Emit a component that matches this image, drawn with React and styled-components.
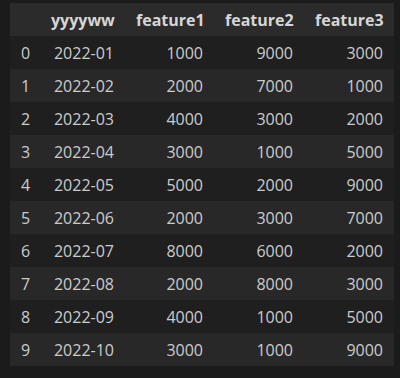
import React from "react";
import styled, { createGlobalStyle } from "styled-components";

const GlobalStyle = createGlobalStyle`
  html, body {
    margin: 0;
    background: #1b1b1b;
  }
`;

const Output = styled.div`
  padding: 3px 6px 12px 10px;
  font-family: "Open Sans", "Noto Sans", sans-serif;
  font-size: 16px;
  color: #cccccc;
`;

const Grid = styled.div`
  display: grid;
  grid-template-columns: 30px 85px 89px 90px 90px;
  width: 384px;
`;

const Row = styled.div`
  display: contents;
  & > div {
    background: ${(props) =>
      props.$header ? "#2b2b2b" : props.$odd ? "#282828" : "#1f1f1f"};
  }
`;

const Cell = styled.div`
  height: 33px;
  line-height: 34px;
  padding: 0 11px;
  text-align: ${(props) => (props.$left ? "left" : "right")};
  font-weight: ${(props) => (props.$bold ? 700 : 400)};
  color: ${(props) => (props.$bold ? "#d6d6d6" : "#cccccc")};
  white-space: nowrap;
`;

const columns = ["yyyyww", "feature1", "feature2", "feature3"];

const data = [
  ["2022-01", 1000, 9000, 3000],
  ["2022-02", 2000, 7000, 1000],
  ["2022-03", 4000, 3000, 2000],
  ["2022-04", 3000, 1000, 5000],
  ["2022-05", 5000, 2000, 9000],
  ["2022-06", 2000, 3000, 7000],
  ["2022-07", 8000, 6000, 2000],
  ["2022-08", 2000, 8000, 3000],
  ["2022-09", 4000, 1000, 5000],
  ["2022-10", 3000, 1000, 9000],
];

export default function App() {
  return (
    <>
      <GlobalStyle />
      <Output>
        <Grid>
          <Row $header>
            <Cell $left />
            {columns.map((c) => (
              <Cell key={c} $bold>
                {c}
              </Cell>
            ))}
          </Row>
          {data.map((row, i) => (
            <Row key={i} $odd={i % 2 === 1}>
              <Cell $left>{i}</Cell>
              {row.map((v, j) => (
                <Cell key={j}>{v}</Cell>
              ))}
            </Row>
          ))}
        </Grid>
      </Output>
    </>
  );
}
